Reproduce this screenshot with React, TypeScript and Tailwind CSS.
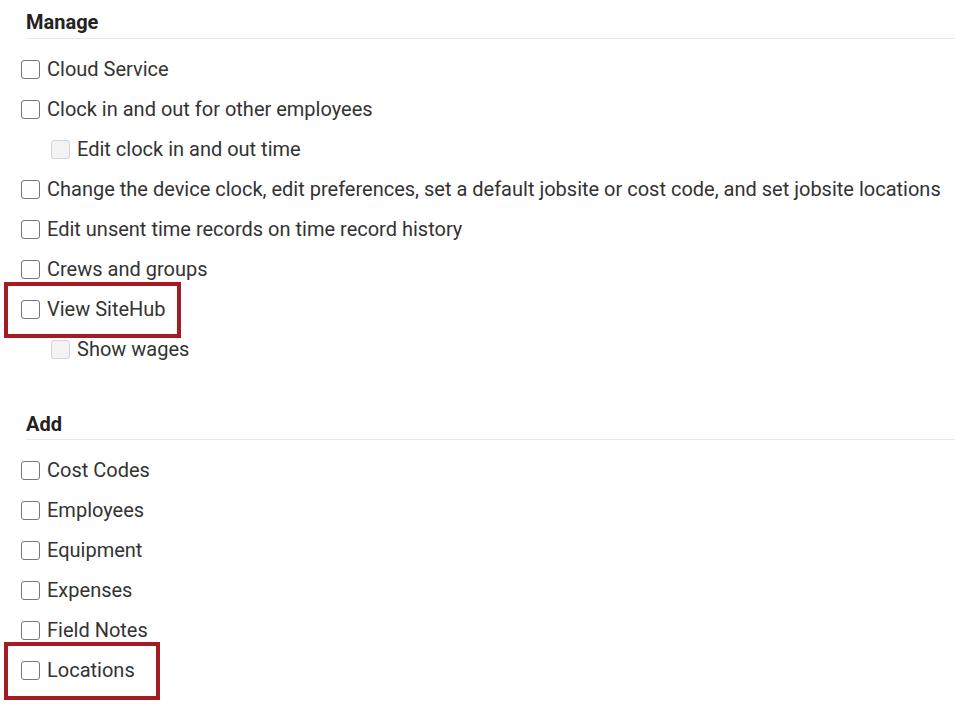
const manage = [
  { label: 'Cloud Service' },
  { label: 'Clock in and out for other employees' },
  { label: 'Edit clock in and out time', sub: true },
  { label: 'Change the device clock, edit preferences, set a default jobsite or cost code, and set jobsite locations' },
  { label: 'Edit unsent time records on time record history' },
  { label: 'Crews and groups' },
  { label: 'View SiteHub', mark: 'w-[177px] h-[56px] top-[-7px]' },
  { label: 'Show wages', sub: true },
];

const add = [
  { label: 'Cost Codes' },
  { label: 'Employees' },
  { label: 'Equipment' },
  { label: 'Expenses' },
  { label: 'Field Notes' },
  { label: 'Locations', mark: 'w-[156px] h-[58px] top-[-8px]' },
];

type Item = { label: string; sub?: boolean; mark?: string };

function Row({ item }: { item: Item }) {
  return (
    <div className={`relative flex items-center h-10 gap-[7px] ${item.sub ? 'pl-[51px]' : 'pl-[21px]'}`}>
      {item.sub ? (
        <span className="w-[19px] h-[19px] rounded-[3px] border border-[#d4d4d4] bg-[#f3f3f3] shrink-0" />
      ) : (
        <span className="w-[19px] h-[19px] rounded-[3px] border-[1.5px] border-[#767676] bg-white shrink-0" />
      )}
      <span className="text-[20px] leading-6 text-[#333] whitespace-nowrap">{item.label}</span>
      {item.mark && (
        <div className={`absolute left-[4px] border-4 border-[#a51b22] ${item.mark}`} />
      )}
    </div>
  );
}

function Section({ title, items, className }: { title: string; items: Item[]; className: string }) {
  return (
    <section className={className}>
      <h2 className="ml-[26px] border-b border-[#e8e8e8] text-[20px] leading-6 font-bold text-[#222]">
        {title}
      </h2>
      <div className="mt-[10px]">
        {items.map((it) => (
          <Row key={it.label} item={it} />
        ))}
      </div>
    </section>
  );
}

export default function App() {
  return (
    <div className="w-[955px] h-[705px] bg-white overflow-hidden" style={{ fontFamily: 'Roboto, "Liberation Sans", sans-serif' }}>
      <Section title="Manage" items={manage} className="pt-[10px] [&>h2]:pb-1" />
      <Section title="Add" items={add} className="pt-[43px] [&>h2]:pb-[3px]" />
    </div>
  );
}
